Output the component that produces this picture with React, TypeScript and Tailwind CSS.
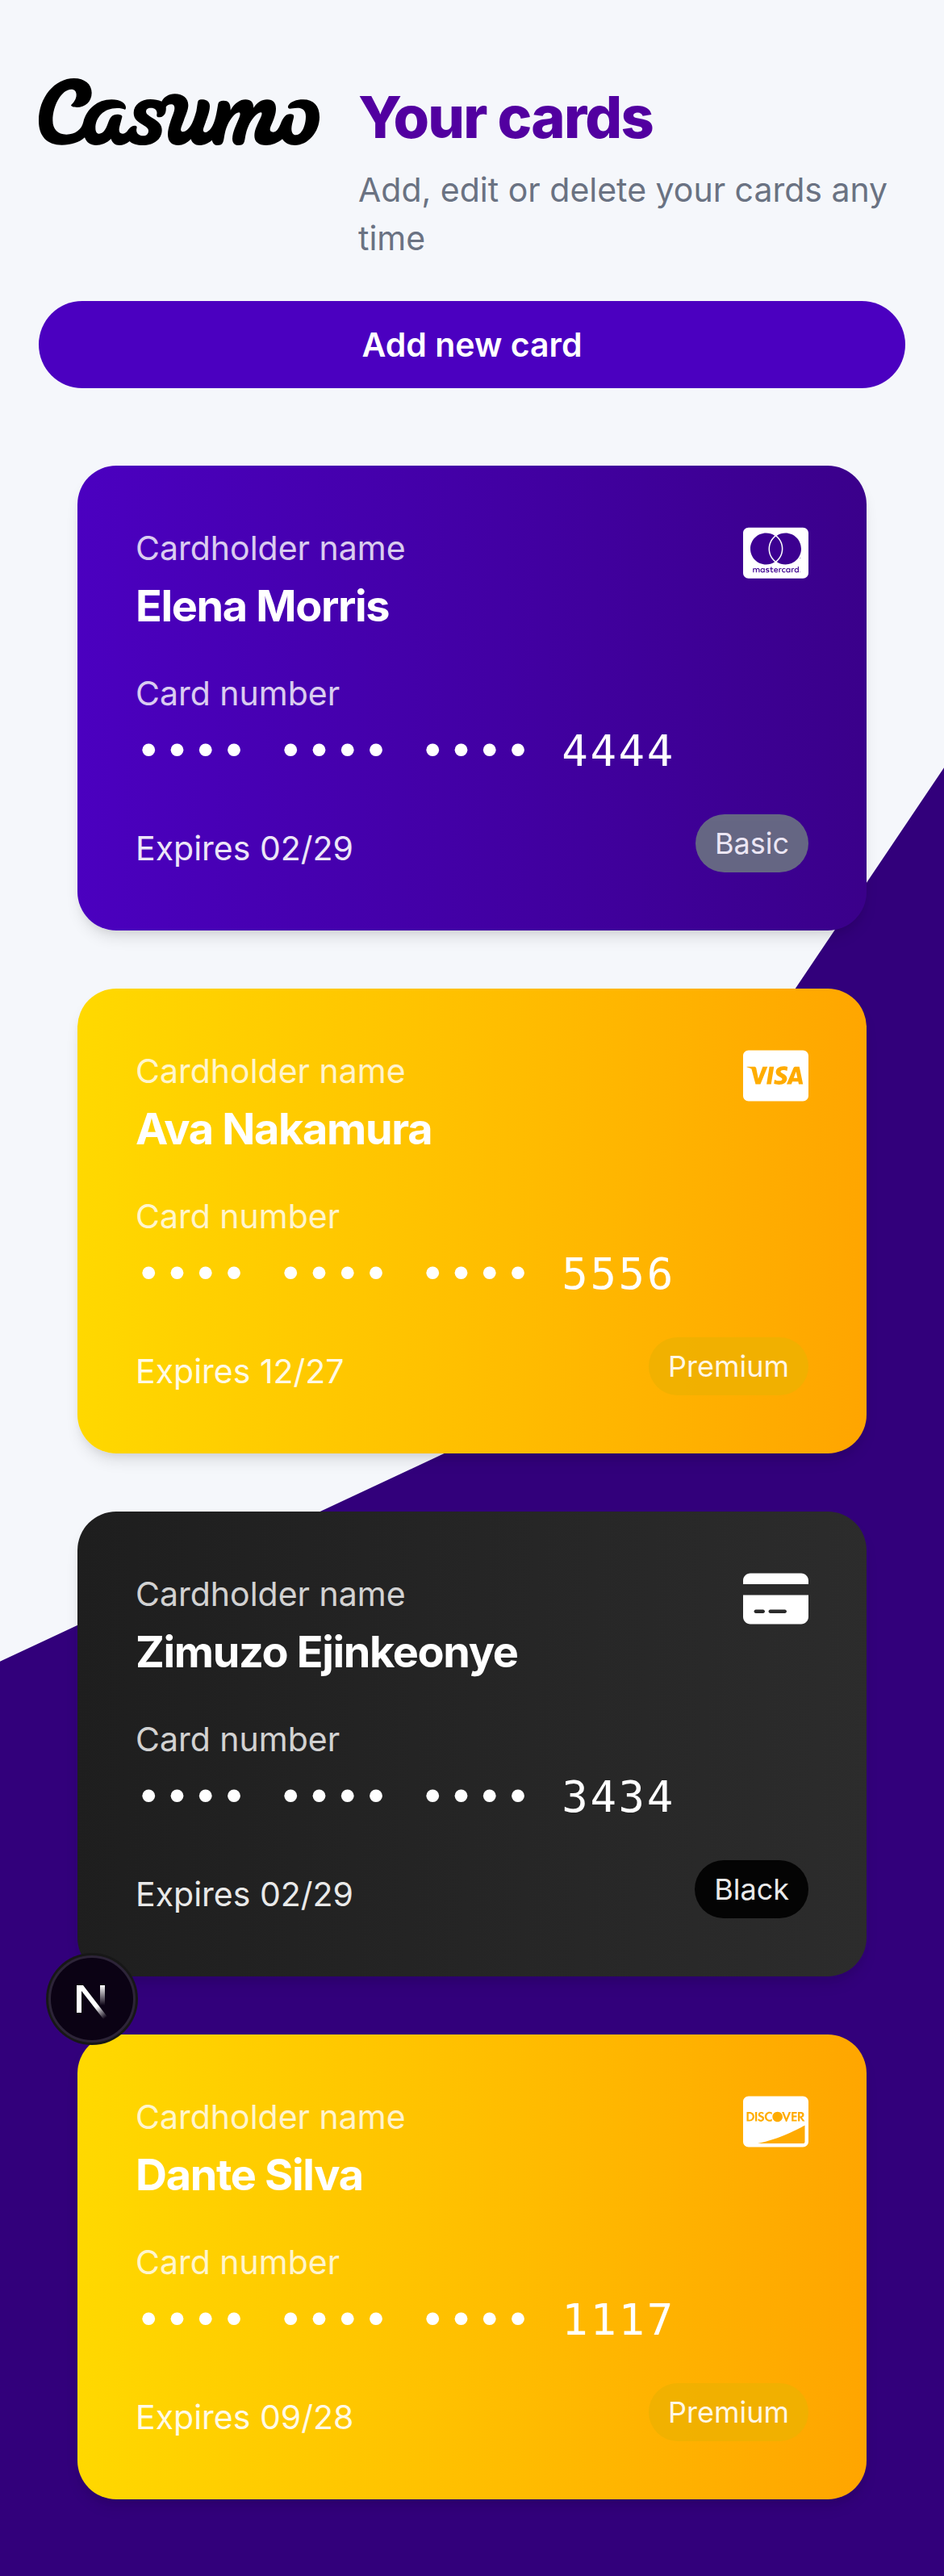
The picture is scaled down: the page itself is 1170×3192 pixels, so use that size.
import type { ComponentType } from "react";
import { FaCcDiscover, FaCcMastercard, FaCcVisa, FaCreditCard } from "react-icons/fa6";

type Tier = "Basic" | "Premium" | "Black";

interface Card {
  name: string;
  last4: string;
  expires: string;
  tier: Tier;
  brand: string;
  Icon: ComponentType<{ className?: string; "aria-label"?: string }>;
}

const cards: Card[] = [
  { name: "Elena Morris", last4: "4444", expires: "02/29", tier: "Basic", brand: "Mastercard", Icon: FaCcMastercard },
  { name: "Ava Nakamura", last4: "5556", expires: "12/27", tier: "Premium", brand: "Visa", Icon: FaCcVisa },
  { name: "Zimuzo Ejinkeonye", last4: "3434", expires: "02/29", tier: "Black", brand: "Card", Icon: FaCreditCard },
  { name: "Dante Silva", last4: "1117", expires: "09/28", tier: "Premium", brand: "Discover", Icon: FaCcDiscover },
];

const cardBackground: Record<Tier, string> = {
  Basic: "bg-[linear-gradient(92deg,#4b00c0,#3a008a)]",
  Premium: "bg-[linear-gradient(92deg,#ffd900,#ffa500)]",
  Black: "bg-[linear-gradient(92deg,#1e1e1e,#2c2c2c)]",
};

const badgeBackground: Record<Tier, string> = {
  Basic: "bg-gray-500",
  Premium: "bg-yellow-500",
  Black: "bg-black",
};

function Logo() {
  return (
    <svg viewBox="54 50 1044 249" className="h-[83px] w-[348px] shrink-0" role="img" aria-label="Casumo">
      <path d="M174 150C182 142 194 128 194 112C194 98 187 91 175 91C140 91 106 150 106 207C106 240 125 259 157 259C190 259 214 240 220 212C232 165 272 129 325 129C358 129 378 143 378 159C378 164 376 167 374 166C368 163 358 161 345 161C295 161 265 196 265 235C265 248 270 256 279 256C295 256 305 237 312 216C319 195 327 184 346 184C358 184 366 188 364 194L355 228C350 246 354 256 366 256C379 256 384 245 388 240C394 231 402 226 412 226C418 226 420 230 418 237C416 245 418 252 423 257C428 262 435 264 442 264C454 264 462 257 462 245C462 235 451 229 438 221C418 209 407 198 407 178C407 150 434 128 469 128C485 128 499 131 511 136C520 120 537 108 560 108C590 108 610 124 610 150C610 168 601 185 593 208C587 225 580 237 583 244C586 252 598 250 608 240C626 222 633 196 640 172L645 140C647 132 650 129 660 129C680 129 690 138 690 153C690 175 680 197 671 223C666 236 663 244 668 249C674 254 686 248 695 235C711 212 716 174 721 145C723 136 730 133 741 133C760 133 768 143 767 169C782 143 802 129 823 129C843 129 852 139 853 160C865 141 883 129 903 129C926 129 936 142 936 163C936 184 927 204 917 228C911 242 914 250 925 250C938 250 947 235 953 220C963 196 972 183 989 183C1001 183 1004 188 1002 196L996 220C992 238 992 261 1011 261C1032 261 1047 225 1047 192C1047 167 1034 160 1015 160C1003 160 995 163 988 163C980 162 979 156 983 150C991 137 1012 129 1037 129C1076 129 1098 153 1098 194C1098 250 1054 299 1007 299C985 299 969 291 960 276C942 291 921 299 900 299C871 299 856 286 856 264C856 243 866 224 877 201C884 187 886 177 880 177C864 178 844 205 834 227C822 253 822 276 818 287C815 296 807 299 797 299C781 299 774 289 774 274C775 249 788 224 799 198C804 185 804 178 799 177C783 177 765 204 755 226C744 250 744 276 739 288C736 297 729 299 719 299C708 299 702 293 698 280C683 293 666 299 651 299C635 299 624 290 620 276C606 291 590 299 573 299C547 299 534 284 534 258C535 230 548 201 557 174C561 160 560 147 546 147C537 147 530 151 527 157C528 165 527 171 525 178C520 190 511 195 502 195C494 195 492 191 493 184C496 171 488 160 471 160C459 160 453 165 453 174C453 183 464 190 477 198C499 211 512 222 512 242C512 277 482 299 441 299C419 299 402 294 392 284C379 294 367 299 354 299C337 299 327 289 323 275C308 291 286 299 267 299C247 299 232 290 225 270C204 289 174 298 140 298C85 298 54 265 54 208C54 122 113 50 185 50C225 50 251 72 251 104C251 138 226 158 196 158C184 158 174 155 174 150Z" />
    </svg>
  );
}

function PaymentCard({ name, last4, expires, tier, brand, Icon }: Card) {
  return (
    <li
      className={`flex flex-col gap-9 rounded-[48px] p-[72px] text-white shadow-[0_12px_18px_-3px_rgba(0,0,0,0.1),0_6px_12px_-6px_rgba(0,0,0,0.1)] ${cardBackground[tier]}`}
    >
      <div className="flex items-start justify-between">
        <div>
          <p className="text-[41px] leading-[60px] opacity-80">Cardholder name</p>
          <h2 className="text-[54px] leading-[84px] font-bold tracking-tight">{name}</h2>
        </div>
        <Icon className="h-[72px] w-[81px]" aria-label={brand} />
      </div>
      <div>
        <p className="text-[41px] leading-[60px] opacity-80">Card number</p>
        <p className="font-['DejaVu_Sans_Mono',monospace] text-[54px] leading-[84px] tracking-wider whitespace-nowrap">
          •••• •••• •••• {last4}
        </p>
      </div>
      <div className="flex items-end justify-between opacity-90">
        <p className="text-[41px] leading-[60px]">Expires {expires}</p>
        <span className={`rounded-full px-6 py-3 text-4xl leading-[48px] ${badgeBackground[tier]}`}>{tier}</span>
      </div>
    </li>
  );
}

function DevToolsButton() {
  return (
    <button
      type="button"
      aria-label="Open Next.js Dev Tools"
      className="absolute top-[2423px] left-15 flex size-27 items-center justify-center rounded-full border-3 border-[#2d2438] bg-[#0b0214] shadow-[0_0_0_3px_#171717]"
    >
      <svg viewBox="0 -8 38 51" className="h-[51px] w-[38px]" fill="none">
        <defs>
          <linearGradient id="diagonal" x1="24" y1="27" x2="35" y2="41" gradientUnits="userSpaceOnUse">
            <stop stopColor="#fff" />
            <stop offset="1" stopColor="#fff" stopOpacity="0" />
          </linearGradient>
          <linearGradient id="stem" x1="32" y1="0" x2="32" y2="25" gradientUnits="userSpaceOnUse">
            <stop stopColor="#fff" />
            <stop offset="1" stopColor="#fff" stopOpacity="0" />
          </linearGradient>
        </defs>
        <path d="M0 0H8L38 39L34 43L6 7V34H0Z" fill="url(#diagonal)" />
        <path d="M29 0H35V25H29Z" fill="url(#stem)" />
      </svg>
    </button>
  );
}

export default function App() {
  return (
    <div className="relative min-h-screen bg-[#f5f7fb] px-12 pt-[97px] pb-[95px] font-[Inter,sans-serif]">
      <div
        aria-hidden="true"
        className="absolute inset-0 bg-[#32007b] [clip-path:polygon(100%_29.8%,53%_55.4%,0_64.5%,0_100%,100%_100%)]"
      />
      <div className="relative flex flex-col">
        <header className="flex flex-col gap-12">
          <div className="flex items-start gap-12">
            <Logo />
            <div className="flex flex-col gap-3">
              <h1 className="text-7xl leading-[96px] font-extrabold tracking-tight text-[#5200a0]">Your cards</h1>
              <p className="text-[41px] leading-[60px] text-gray-500">Add, edit or delete your cards any time</p>
            </div>
          </div>
          <button type="button" className="h-27 rounded-full bg-[#4b00c0] text-[41px] leading-[60px] font-semibold text-white">
            Add new card
          </button>
        </header>
        <main className="p-12 pt-24 pb-0">
          <ul className="flex flex-col gap-18">
            {cards.map((card) => (
              <PaymentCard key={card.name} {...card} />
            ))}
          </ul>
        </main>
      </div>
      <DevToolsButton />
    </div>
  );
}
